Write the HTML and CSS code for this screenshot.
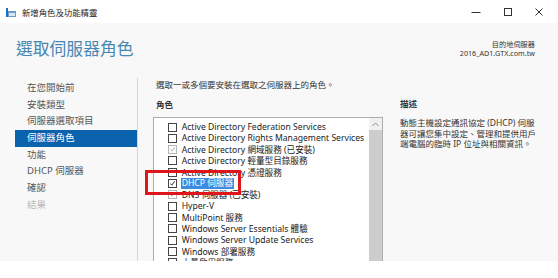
FILE: index.html
```html
<!DOCTYPE html>
<html lang="zh-Hant">
<head>
  <meta charset="UTF-8" />
  <title>新增角色及功能精靈</title>
  <link rel="stylesheet" href="styles.css">
</head>
<body>
  <div class="window">
    <div class="titlebar">
      <svg class="app-icon" width="10" height="9" viewBox="0 0 10 9">
        <rect x="0" y="0" width="2" height="9" fill="#1b6fc2"/>
        <rect x="2" y="3" width="8" height="6" fill="#6f9bc9"/>
        <rect x="3" y="5" width="6" height="3" fill="#d9e6f2"/>
      </svg>
      <span class="title">新增角色及功能精靈</span>
      <div class="controls">
        <span class="ctl"><svg width="10" height="10" viewBox="0 0 10 10"><path d="M0.5 5.5h9" stroke="#333" stroke-width="1"/></svg></span>
        <span class="ctl"><svg width="10" height="10" viewBox="0 0 10 10"><rect x="1.5" y="1.5" width="7" height="7" fill="none" stroke="#333" stroke-width="1"/></svg></span>
        <span class="ctl"><svg width="10" height="10" viewBox="0 0 10 10"><path d="M1.5 1.5l7 7M8.5 1.5l-7 7" stroke="#333" stroke-width="1"/></svg></span>
      </div>
    </div>

    <div class="frame">
      <div class="header">
        <h1>選取伺服器角色</h1>
        <div class="dest">
          <div>目的地伺服器</div>
          <div>2016_AD1.GTX.com.tw</div>
        </div>
      </div>

      <div class="main">
        <nav class="nav">
          <ul>
            <li>在您開始前</li>
            <li>安裝類型</li>
            <li>伺服器選取項目</li>
            <li class="active">伺服器角色</li>
            <li>功能</li>
            <li>DHCP 伺服器</li>
            <li>確認</li>
            <li class="off">結果</li>
          </ul>
        </nav>

        <section class="content">
          <div class="roles">
            <p class="intro">選取一或多個要安裝在選取之伺服器上的角色。</p>
            <h2>角色</h2>
            <div class="listbox">
              <ul class="role-list">
                <li><span class="check"></span>Active Directory Federation Services</li>
                <li><span class="check"></span>Active Directory Rights Management Services</li>
                <li><span class="check installed"><svg viewBox="0 0 9 9"><path d="M1.8 4.6l1.8 2 3.8-5" fill="none" stroke="#9a9a9a" stroke-width="1.1"/></svg></span>Active Directory 網域服務 (已安裝)</li>
                <li><span class="check"></span>Active Directory 輕量型目錄服務</li>
                <li><span class="check"></span>Active Directory 憑證服務</li>
                <li><span class="check"><svg viewBox="0 0 9 9"><path d="M1.8 4.6l1.8 2 3.8-5" fill="none" stroke="#111" stroke-width="1.1"/></svg></span><span class="selected">DHCP 伺服器</span></li>
                <li><span class="check installed"><svg viewBox="0 0 9 9"><path d="M1.8 4.6l1.8 2 3.8-5" fill="none" stroke="#9a9a9a" stroke-width="1.1"/></svg></span>DNS 伺服器 (已安裝)</li>
                <li><span class="check"></span>Hyper-V</li>
                <li><span class="check"></span>MultiPoint 服務</li>
                <li><span class="check"></span>Windows Server Essentials 體驗</li>
                <li><span class="check"></span>Windows Server Update Services</li>
                <li><span class="check"></span>Windows 部署服務</li>
                <li><span class="check"></span>大量啟用服務</li>
              </ul>
              <div class="scrollbar">
                <div class="scroll-up">
                  <svg width="7" height="5" viewBox="0 0 7 5"><path d="M0.5 4l3-3 3 3" fill="none" stroke="#8a8a8a" stroke-width="1"/></svg>
                </div>
                <div class="thumb"></div>
              </div>
            </div>
            <div class="marker"></div>
          </div>

          <div class="desc">
            <h2>描述</h2>
            <p>動態主機設定通訊協定 (DHCP) 伺服<br>器可讓您集中設定、管理和提供用戶<br>端電腦的臨時 IP 位址與相關資訊。</p>
          </div>
        </section>
      </div>
    </div>
  </div>
</body>
</html>
```

FILE: styles.css
```css
body {
  margin: 0;
  background-color: #fff;
  font-family: "Noto Sans", "Noto Sans CJK TC", sans-serif;
  color: #333;
}
.window {
  width: 558px;
  height: 278px;
  overflow: hidden;
}

/* title bar */
.titlebar {
  height: 23px;
  display: flex;
  align-items: center;
  background-color: #fff;
}
.app-icon {
  margin: 1px 6px 0 6px;
}
.title {
  font-size: 8.4px;
  color: #222;
}
.controls {
  margin-left: auto;
  margin-right: 3px;
  display: flex;
}
.ctl {
  width: 31.5px;
  height: 23px;
  display: flex;
  align-items: center;
  justify-content: center;
}

/* window body */
.frame {
  height: 238px;
  background-color: #f8f8f8;
}
.header {
  height: 55px;
  display: flex;
  justify-content: space-between;
  padding: 0 23px 0 16px;
}
.header h1 {
  margin: 0;
  padding-top: 16px;
  font-size: 16.8px;
  line-height: 20px;
  font-weight: normal;
  color: #4787b4;
}
.dest {
  padding-top: 17px;
  font-size: 7.2px;
  line-height: 9px;
  text-align: right;
  color: #333;
}

.main {
  height: 183px;
  display: flex;
  overflow: hidden;
}

/* left steps */
.nav {
  width: 137px;
  flex-shrink: 0;
  padding-top: 2px;
  border-right: 1px solid #d6d6d6;
}
.nav ul {
  list-style: none;
  margin: 0 0 0 15px;
  padding: 0;
}
.nav li {
  height: 16.7px;
  line-height: 16.7px;
  padding-left: 12px;
  font-size: 9.5px;
  color: #555;
}
.nav li.active {
  background-color: #0b63ae;
  color: #fff;
}
.nav li.off {
  color: #b8b8b8;
}

/* roles */
.content {
  flex: 1;
  display: flex;
  padding-left: 15px;
}
.roles {
  width: 230px;
  flex-shrink: 0;
  position: relative;
}
.intro {
  margin: 0;
  padding: 1px 0 0 3px;
  font-size: 8.5px;
  line-height: 12px;
}
.roles h2,
.desc h2 {
  margin: 8px 0 0;
  padding-left: 3px;
  font-size: 8.5px;
  line-height: 12px;
  font-weight: bold;
  color: #333;
}
.listbox {
  margin-top: 6px;
  height: 200px;
  display: flex;
  border: 1px solid #abadb3;
  background-color: #fff;
}
.role-list {
  flex: 1;
  min-width: 0;
  overflow: hidden;
  list-style: none;
  margin: 0;
  padding: 3.4px 0 0 14px;
}
.role-list li {
  height: 11.3px;
  display: flex;
  align-items: center;
  gap: 4.7px;
  font-size: 8.6px;
  color: #222;
  white-space: nowrap;
}
.check {
  width: 9px;
  height: 9px;
  flex-shrink: 0;
  box-sizing: border-box;
  border: 1px solid #444;
  background-color: #fff;
  display: flex;
}
.check svg {
  width: 7px;
  height: 7px;
}
.check.installed {
  border-color: #b4b4b4;
}
.selected {
  background-color: #3b8be0;
  color: #fff;
  line-height: 11px;
  padding: 0 1px;
  margin-left: -1px;
}
.scrollbar {
  width: 13px;
  flex-shrink: 0;
  display: flex;
  flex-direction: column;
  background-color: #f0f0f0;
}
.scroll-up {
  height: 12px;
  display: flex;
  align-items: center;
  justify-content: center;
}
.thumb {
  flex: 1;
  background-color: #cdcdcd;
}
.marker {
  position: absolute;
  left: -8px;
  top: 92px;
  width: 96px;
  height: 25px;
  box-sizing: border-box;
  border: 3px solid #e0141b;
}

/* description */
.desc {
  margin-left: 17px;
  width: 150px;
}
.desc h2 {
  margin-top: 20px;
  padding-left: 0;
}
.desc p {
  margin: 8px 0 0;
  font-size: 8.5px;
  line-height: 10.6px;
  color: #333;
  white-space: nowrap;
}
```
